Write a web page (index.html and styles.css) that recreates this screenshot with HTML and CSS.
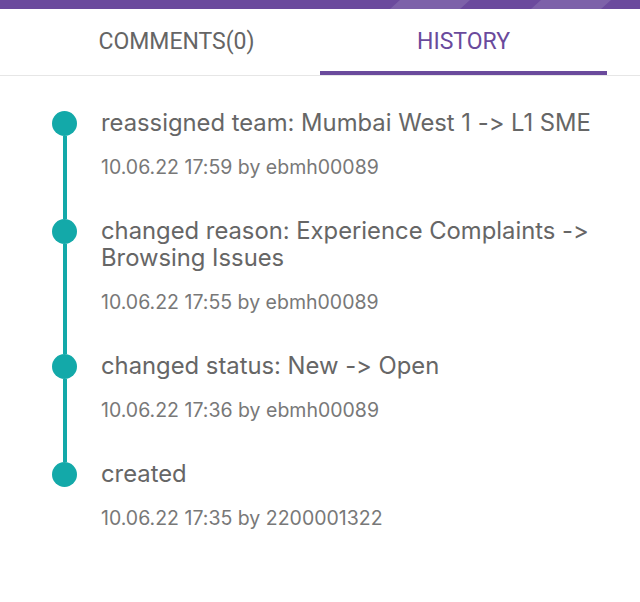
FILE: index.html
```html
<!DOCTYPE html>
<html lang="en">
<head>
<meta charset="utf-8">
<title>History</title>
<link rel="stylesheet" href="styles.css">
</head>
<body>
<div class="topbar">
  <span class="stripe stripe-a"></span>
  <span class="stripe stripe-b"></span>
</div>
<nav class="tabs">
  <div class="tab">COMMENTS(0)</div>
  <div class="tab active">HISTORY</div>
</nav>
<main class="timeline">
  <div class="item">
    <div class="rail"><span class="dot"></span><span class="line"></span></div>
    <div class="content">
      <div class="title">reassigned team: Mumbai West 1 -&gt; L1 SME</div>
      <div class="sub">10.06.22 17:59 by ebmh00089</div>
    </div>
  </div>
  <div class="item">
    <div class="rail"><span class="dot"></span><span class="line"></span></div>
    <div class="content">
      <div class="title">changed reason: Experience Complaints -&gt;<br>Browsing Issues</div>
      <div class="sub">10.06.22 17:55 by ebmh00089</div>
    </div>
  </div>
  <div class="item">
    <div class="rail"><span class="dot"></span><span class="line"></span></div>
    <div class="content">
      <div class="title">changed status: New -&gt; Open</div>
      <div class="sub">10.06.22 17:36 by ebmh00089</div>
    </div>
  </div>
  <div class="item last">
    <div class="rail"><span class="dot"></span><span class="line"></span></div>
    <div class="content">
      <div class="title">created</div>
      <div class="sub">10.06.22 17:35 by 2200001322</div>
    </div>
  </div>
</main>
</body>
</html>
```
FILE: styles.css
```css
html, body {
  margin: 0;
  padding: 0;
  background: #ffffff;
}
body {
  width: 640px;
  height: 602px;
  overflow: hidden;
  font-family: Inter, "Noto Sans", sans-serif;
  font-feature-settings: "calt" 0, "liga" 0;
}
.topbar {
  position: relative;
  height: 9px;
  background: #6b4a9d;
  overflow: hidden;
}
.stripe {
  position: absolute;
  top: 0;
  height: 9px;
  width: 70px;
  background: #7d61a9;
  transform: skewX(-48deg);
}
.stripe-a { left: 395px; }
.stripe-b { left: 536px; }
.tabs {
  display: flex;
  padding: 0 33px;
  border-bottom: 1px solid #e6e6e6;
}
.tab {
  flex: 1;
  height: 66px;
  box-sizing: border-box;
  display: flex;
  align-items: center;
  justify-content: center;
  padding-top: 2px;
  font-family: Roboto, "Liberation Sans", sans-serif;
  font-size: 23px;
  color: #656565;
  border-bottom: 4px solid transparent;
}
.tab.active {
  color: #6a4a9c;
  border-bottom-color: #6a4a9c;
}
.timeline {
  padding-top: 35px;
}
.item {
  display: flex;
}
.rail {
  width: 25px;
  margin-left: 52px;
  display: flex;
  flex-direction: column;
  align-items: center;
}
.dot {
  width: 25px;
  height: 25px;
  border-radius: 50%;
  background: #13a9a9;
  flex: none;
}
.line {
  flex: 1;
  width: 4px;
  background: #13a9a9;
}
.item.last .line {
  background: transparent;
}
.content {
  margin-left: 24px;
  padding-bottom: 40px;
}
.title {
  margin-top: -2px;
  font-size: 23.8px;
  line-height: 27px;
  color: #666666;
}
.sub {
  margin-top: 19px;
  font-size: 19.5px;
  line-height: 24px;
  color: #787878;
}
```
